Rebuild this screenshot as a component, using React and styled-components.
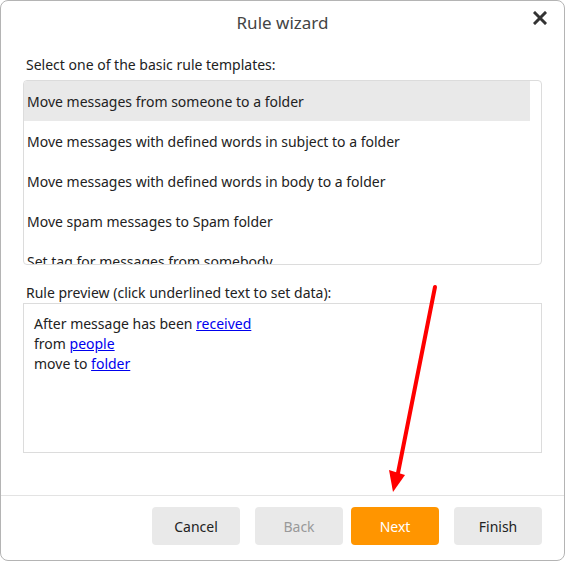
import styled, { createGlobalStyle } from "styled-components";

const GlobalStyle = createGlobalStyle`
  html, body { margin: 0; padding: 0; background: #fff; }
  body { font-family: "Noto Sans", "Open Sans", sans-serif; }
`;

const Dialog = styled.div`
  position: relative;
  box-sizing: border-box;
  width: 565px;
  height: 561px;
  border: 1px solid #b4b4b4;
  border-radius: 8px;
  background: #fff;
  display: flex;
  flex-direction: column;
  color: #222;
`;

const Header = styled.div`
  display: grid;
  grid-template-columns: 40px 1fr 40px;
  align-items: center;
  height: 42px;
`;

const Title = styled.div`
  grid-column: 2;
  text-align: center;
  font-size: 17px;
  color: #444;
`;

const Close = styled.button`
  grid-column: 3;
  justify-self: start;
  width: 16px;
  height: 16px;
  padding: 0;
  margin-left: 8px;
  margin-top: -8px;
  border: none;
  background: none;
  display: flex;
  align-items: center;
  justify-content: center;
`;

const Body = styled.div`
  flex: 1;
  padding: 0 22px;
  display: flex;
  flex-direction: column;
`;

const Label = styled.div`
  font-size: 14px;
  line-height: 20px;
  padding-left: 3px;
  margin-top: ${p => p.$top}px;
  margin-bottom: ${p => p.$bottom}px;
`;

const List = styled.div`
  height: 185px;
  box-sizing: border-box;
  border: 1px solid #dcdcdc;
  border-radius: 4px;
  padding-right: 11px;
  overflow: hidden;
`;

const Row = styled.div`
  height: 40px;
  display: flex;
  align-items: center;
  padding-left: 3px;
  font-size: 14px;
  white-space: nowrap;
  background: ${p => (p.$selected ? "#e9e9e9" : "transparent")};
`;

const Preview = styled.div`
  height: 150px;
  box-sizing: border-box;
  border: 1px solid #dcdcdc;
  padding: 10px 10px;
  font-size: 14px;
  line-height: 20px;
`;

const Link = styled.a`
  color: #0000ee;
  text-decoration: underline;
  cursor: pointer;
`;

const Footer = styled.div`
  border-top: 1px solid #e3e3e3;
  height: 65px;
  box-sizing: border-box;
  padding: 11px 22px 0 0;
  display: flex;
  justify-content: flex-end;
  align-items: flex-start;
`;

const Button = styled.button`
  width: 88px;
  height: 38px;
  margin-left: ${p => p.$gap}px;
  border: none;
  border-radius: 4px;
  font-family: inherit;
  font-size: 14px;
  background: ${p => (p.$primary ? "#ff9500" : "#e9e9e9")};
  color: ${p => (p.$primary ? "#fff" : p.disabled ? "#999" : "#222")};
`;

const Arrow = styled.svg`
  position: absolute;
  left: 0;
  top: 0;
  pointer-events: none;
`;

const templates = [
  "Move messages from someone to a folder",
  "Move messages with defined words in subject to a folder",
  "Move messages with defined words in body to a folder",
  "Move spam messages to Spam folder",
  "Set tag for messages from somebody",
];

export default function App() {
  return (
    <>
      <GlobalStyle />
      <Dialog>
        <Header>
          <Title>Rule wizard</Title>
          <Close aria-label="Close">
            <svg width="14" height="14" viewBox="0 0 14 14">
              <path d="M2 2L12 12M12 2L2 12" stroke="#333" strokeWidth="3" strokeLinecap="square" />
            </svg>
          </Close>
        </Header>
        <Body>
          <Label $top={12} $bottom={5}>Select one of the basic rule templates:</Label>
          <List>
            {templates.map((t, i) => (
              <Row key={t} $selected={i === 0}>{t}</Row>
            ))}
          </List>
          <Label $top={18} $bottom={0}>Rule preview (click underlined text to set data):</Label>
          <Preview>
            <div>After message has been <Link>received</Link></div>
            <div>from <Link>people</Link></div>
            <div>move to <Link>folder</Link></div>
          </Preview>
        </Body>
        <Footer>
          <Button>Cancel</Button>
          <Button $gap={15} disabled>Back</Button>
          <Button $gap={8} $primary>Next</Button>
          <Button $gap={15}>Finish</Button>
        </Footer>
        <Arrow width="565" height="561" viewBox="0 0 565 561">
          <line x1="434" y1="286" x2="397" y2="472" stroke="#ff0000" strokeWidth="4" strokeLinecap="round" />
          <polygon points="388,469 404,474 392,491" fill="#ff0000" />
        </Arrow>
      </Dialog>
    </>
  );
}
